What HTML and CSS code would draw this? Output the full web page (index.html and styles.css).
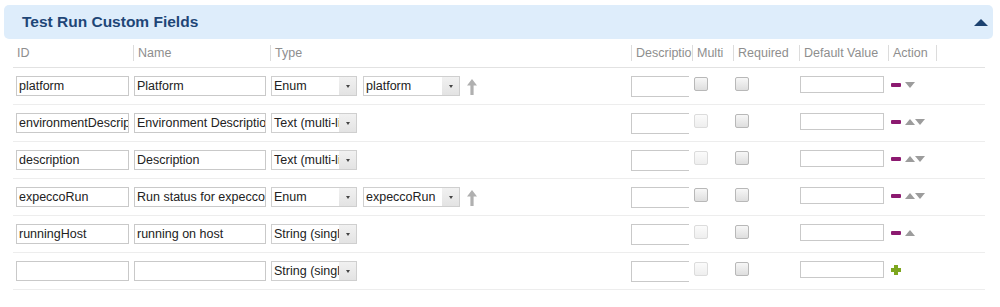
FILE: index.html
```html
<!DOCTYPE html>
<html>
<head>
<meta charset="utf-8">
<link rel="stylesheet" href="styles.css">
</head>
<body>
<div class="page">
  <div class="panel-head">
    <span class="panel-title">Test Run Custom Fields</span>
    <span class="collapse-tri"></span>
  </div>
  <div class="table">
    <div class="grid thead">
      <div class="th first">ID</div>
      <div class="th">Name</div>
      <div class="th">Type</div>
      <div class="th">Description</div>
      <div class="th">Multi</div>
      <div class="th">Required</div>
      <div class="th">Default Value</div>
      <div class="th last">Action</div>
    </div>

    <div class="grid row">
      <div class="cell c-id"><div class="inp w-id">platform</div></div>
      <div class="cell c-name"><div class="inp w-name">Platform</div></div>
      <div class="cell c-type">
        <div class="sel w-type"><span class="sel-text">Enum</span><span class="sel-btn"><i></i></span></div>
        <div class="sel w-enum"><span class="sel-text">platform</span><span class="sel-btn"><i></i></span></div>
        <svg class="uparrow" width="10" height="16" viewBox="0 0 10 16"><path d="M5 0 L10 6.5 L6.6 6.5 L6.6 16 L3.4 16 L3.4 6.5 L0 6.5 Z" fill="#b0b0b0"/></svg>
      </div>
      <div class="cell c-desc"><div class="ta"></div></div>
      <div class="cell c-multi"><span class="cb"></span></div>
      <div class="cell c-req"><span class="cb"></span></div>
      <div class="cell c-def"><div class="inp w-def"></div></div>
      <div class="cell c-act"><span class="minus"></span><span class="down"></span></div>
    </div>

    <div class="grid row">
      <div class="cell c-id"><div class="inp w-id">environmentDescription</div></div>
      <div class="cell c-name"><div class="inp w-name">Environment Description</div></div>
      <div class="cell c-type">
        <div class="sel w-type"><span class="sel-text">Text (multi-line)</span><span class="sel-btn"><i></i></span></div>
      </div>
      <div class="cell c-desc"><div class="ta"></div></div>
      <div class="cell c-multi"><span class="cb off"></span></div>
      <div class="cell c-req"><span class="cb"></span></div>
      <div class="cell c-def"><div class="inp w-def"></div></div>
      <div class="cell c-act"><span class="minus"></span><span class="up"></span><span class="down"></span></div>
    </div>

    <div class="grid row">
      <div class="cell c-id"><div class="inp w-id">description</div></div>
      <div class="cell c-name"><div class="inp w-name">Description</div></div>
      <div class="cell c-type">
        <div class="sel w-type"><span class="sel-text">Text (multi-line)</span><span class="sel-btn"><i></i></span></div>
      </div>
      <div class="cell c-desc"><div class="ta"></div></div>
      <div class="cell c-multi"><span class="cb off"></span></div>
      <div class="cell c-req"><span class="cb"></span></div>
      <div class="cell c-def"><div class="inp w-def"></div></div>
      <div class="cell c-act"><span class="minus"></span><span class="up"></span><span class="down"></span></div>
    </div>

    <div class="grid row">
      <div class="cell c-id"><div class="inp w-id">expeccoRun</div></div>
      <div class="cell c-name"><div class="inp w-name">Run status for expecco</div></div>
      <div class="cell c-type">
        <div class="sel w-type"><span class="sel-text">Enum</span><span class="sel-btn"><i></i></span></div>
        <div class="sel w-enum"><span class="sel-text">expeccoRun</span><span class="sel-btn"><i></i></span></div>
        <svg class="uparrow" width="10" height="16" viewBox="0 0 10 16"><path d="M5 0 L10 6.5 L6.6 6.5 L6.6 16 L3.4 16 L3.4 6.5 L0 6.5 Z" fill="#b0b0b0"/></svg>
      </div>
      <div class="cell c-desc"><div class="ta"></div></div>
      <div class="cell c-multi"><span class="cb"></span></div>
      <div class="cell c-req"><span class="cb"></span></div>
      <div class="cell c-def"><div class="inp w-def"></div></div>
      <div class="cell c-act"><span class="minus"></span><span class="up"></span><span class="down"></span></div>
    </div>

    <div class="grid row">
      <div class="cell c-id"><div class="inp w-id">runningHost</div></div>
      <div class="cell c-name"><div class="inp w-name">running on host</div></div>
      <div class="cell c-type">
        <div class="sel w-type"><span class="sel-text">String (single-line)</span><span class="sel-btn"><i></i></span></div>
      </div>
      <div class="cell c-desc"><div class="ta"></div></div>
      <div class="cell c-multi"><span class="cb off"></span></div>
      <div class="cell c-req"><span class="cb"></span></div>
      <div class="cell c-def"><div class="inp w-def"></div></div>
      <div class="cell c-act"><span class="minus"></span><span class="up"></span></div>
    </div>

    <div class="grid row">
      <div class="cell c-id"><div class="inp w-id"></div></div>
      <div class="cell c-name"><div class="inp w-name"></div></div>
      <div class="cell c-type">
        <div class="sel w-type"><span class="sel-text">String (single-line)</span><span class="sel-btn"><i></i></span></div>
      </div>
      <div class="cell c-desc"><div class="ta"></div></div>
      <div class="cell c-multi"><span class="cb off"></span></div>
      <div class="cell c-req"><span class="cb"></span></div>
      <div class="cell c-def"><div class="inp w-def"></div></div>
      <div class="cell c-act"><span class="plus"></span></div>
    </div>
  </div>
</div>
</body>
</html>
```
FILE: styles.css
```css
html, body {
  margin: 0;
  padding: 0;
  background: #ffffff;
  font-family: "Liberation Sans", Arial, sans-serif;
  font-size: 12.5px;
  color: #222;
}

.page {
  padding: 5px 0 0 4px;
}

.panel-head {
  width: 989px;
  height: 34px;
  box-sizing: border-box;
  background: #deedfb;
  border-radius: 5px;
  display: flex;
  align-items: center;
  justify-content: space-between;
  padding: 0 5px 0 18px;
}

.panel-title {
  font-size: 15.5px;
  font-weight: bold;
  color: #1e4677;
}

.collapse-tri {
  width: 0;
  height: 0;
  border-left: 7px solid transparent;
  border-right: 7px solid transparent;
  border-bottom: 7px solid #1c4270;
}

.table {
  margin-left: 9px;
  width: 972px;
}

.grid {
  display: grid;
  grid-template-columns: 120px 137px 361px 61px 41px 66px 89px 49px 1fr;
}

.thead {
  height: 28px;
  border-bottom: 1px solid #e2e2e2;
}

.th {
  margin-top: 6px;
  height: 16px;
  line-height: 17px;
  border-left: 1px solid #dcdcdc;
  padding-left: 4px;
  color: #8e8e8e;
  white-space: nowrap;
  overflow: hidden;
}

.th.first {
  border-left: none;
}

.th.last {
  border-right: 1px solid #dcdcdc;
}

.row {
  height: 36px;
  border-bottom: 1px solid #ededed;
}

.cell {
  padding-top: 8px;
  display: flex;
  align-items: flex-start;
  min-width: 0;
}

.inp {
  box-sizing: border-box;
  height: 20px;
  border: 1px solid #c9c9c9;
  background: #fff;
  padding: 0 2px;
  line-height: 18px;
  white-space: nowrap;
  overflow: hidden;
  color: #222;
}

.w-id { width: 113px; margin-left: 3px; }
.w-name { width: 132px; margin-left: 1px; }
.w-def { width: 84px; height: 17px; margin-left: 1px; }

.c-type { gap: 6px; }

.sel {
  box-sizing: border-box;
  height: 20px;
  border: 1px solid #cfcfcf;
  background: #fff;
  display: flex;
}

.w-type { width: 86px; margin-left: 1px; }
.w-enum { width: 97px; }

.sel-text {
  flex: 1;
  min-width: 0;
  overflow: hidden;
  white-space: nowrap;
  line-height: 18px;
  padding-left: 2px;
}

.sel-btn {
  width: 17px;
  background: linear-gradient(#f1f1f1, #e3e3e3);
  display: flex;
  align-items: center;
  justify-content: center;
}

.sel-btn i {
  width: 0;
  height: 0;
  border-left: 2.5px solid transparent;
  border-right: 2.5px solid transparent;
  border-top: 3px solid #444;
}

.uparrow {
  margin-left: 1px;
  margin-top: 3px;
}

.ta {
  box-sizing: border-box;
  width: 58px;
  height: 21px;
  border: 1px solid #c9c9c9;
  border-right: none;
}

.cb {
  box-sizing: border-box;
  width: 14px;
  height: 14px;
  margin-top: 1px;
  margin-left: 2px;
  border: 1px solid #b8b8b8;
  border-radius: 2px;
  background: linear-gradient(#f7f7f7, #dedede);
}

.cb.off {
  border-color: #dcdcdc;
  background: linear-gradient(#fbfbfb, #eeeeee);
}

.c-act {
  height: 17px;
  align-items: center;
  padding-left: 3px;
}

.minus {
  width: 10px;
  height: 4px;
  background: #8c1a70;
  border-radius: 1px;
  margin-right: 4px;
}

.up {
  width: 0;
  height: 0;
  border-left: 5px solid transparent;
  border-right: 5px solid transparent;
  border-bottom: 6px solid #9c9c9c;
}

.down {
  width: 0;
  height: 0;
  border-left: 5px solid transparent;
  border-right: 5px solid transparent;
  border-top: 6px solid #9c9c9c;
}

.plus {
  width: 10px;
  height: 10px;
  background:
    linear-gradient(#7da61f, #7da61f) center / 4px 10px no-repeat,
    linear-gradient(#7da61f, #7da61f) center / 10px 4px no-repeat;
}
```
